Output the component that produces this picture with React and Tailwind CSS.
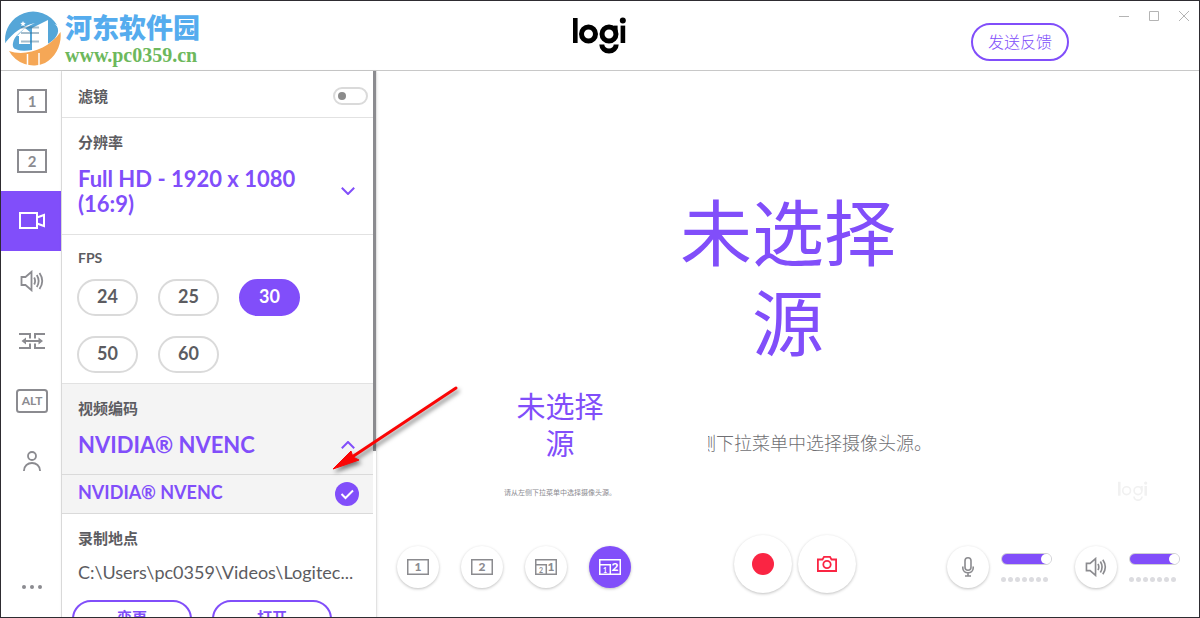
import { useState } from "react";
import clsx from "clsx";

function LogiMark({ className, ring = 5 }) {
  return (
    <svg viewBox="0 0 54 37" className={className} role="img" aria-label="logi" fill="none" stroke="currentColor" strokeWidth={ring}>
      <rect x="0" y="1" width="4.6" height="25" fill="currentColor" stroke="none" />
      <circle cx="15.5" cy="17" r="7" />
      <circle cx="36" cy="17" r="7" />
      <rect x="40.6" y="8.6" width="4" height="8" fill="currentColor" stroke="none" />
      <path d="M28.8 27.5a7.2 6.6 0 0 0 14.4 0" />
      <rect x="47.6" y="8.6" width="4.6" height="17.4" fill="currentColor" stroke="none" />
      <circle cx="49.8" cy="3.4" r="3" fill="currentColor" stroke="none" />
    </svg>
  );
}

function SiteBadge() {
  return (
    <div className="flex items-center gap-1 pt-1.5 pl-1 font-['Liberation_Serif',serif]">
      <svg viewBox="0 0 56 56" className="size-14" aria-hidden="true">
        <path d="M0.300 32A28 28 0 0 1 52 14C44 11 34 13 24 18C13 22 5 27 0.300 32Z" fill="#55a6d8" />
        <path d="M5 36C1 29 6 22 15 18L36 8L48 12C55 15 55 24 47 30C36 38 18 44 5 36Z" fill="#55a6d8" />
        <path d="M1 31C8 22 17 15 30 12C17 18 9 25 8 32C7 37 10 39 15 39C8 42 1 40 1 31Z" fill="#fff" />
        <path d="M14 33V25H12L20 17L25 21V33Z" fill="#fff" />
        <path d="M27 40V17L43 9V35Z" fill="#fff" />
        <path d="M18 10l.8 1.800 2 .2-1.500 1.300.4 2-1.700-1-1.700 1 .4-2-1.500-1.300 2-.2z" fill="#fff" />
        <path d="M16 16.500H34M16 22H34M16 30.500H34" stroke="#3b6f90" strokeWidth="2" opacity=".45" />
        <path d="M4 40C20 46 44 38 55.500 21C57 33 51 46 40 52A28 28 0 0 1 4 40Z" fill="#f5a756" />
        <path d="M22.500 43V56M34 42V56" stroke="#fff" strokeWidth="1.500" />
      </svg>
      <div>
        <p className="font-['Noto_Sans_CJK_SC',sans-serif] text-[27px] leading-8 font-black text-[#55acee]">河东软件园</p>
        <p className="text-xl leading-6 font-bold text-[#6db85c]">www.pc0359.cn</p>
      </div>
    </div>
  );
}

function ScreenIcon({ n, className }) {
  return (
    <svg viewBox="0 0 30 24" className={className} fill="none" stroke="currentColor" strokeWidth="2" aria-hidden="true">
      <rect x="1" y="1" width="28" height="22" />
      <text x="15" y="17.500" textAnchor="middle" fontSize="15" fontWeight="700" fill="currentColor" stroke="none">
        {n}
      </text>
    </svg>
  );
}

function SmallScreenIcon({ n }) {
  return (
    <svg viewBox="0 0 22 16" className="h-4 w-[22px]" fill="none" stroke="currentColor" strokeWidth="1.500" aria-hidden="true">
      <rect x=".75" y=".75" width="20.500" height="14.500" />
      <text x="11" y="12" textAnchor="middle" fontSize="12" fontWeight="900" fill="currentColor" stroke="none">
        {n}
      </text>
    </svg>
  );
}

function PipIcon({ big, small }) {
  return (
    <svg viewBox="0 0 22 16" className="h-4 w-[22px]" fill="none" stroke="currentColor" strokeWidth="1.500" aria-hidden="true">
      <rect x=".75" y=".75" width="20.500" height="14.500" />
      <path d="M1 5.700H11.300V15" />
      <text x="6" y="13.500" textAnchor="middle" fontSize="7" fontWeight="700" fill="currentColor" stroke="none">
        {small}
      </text>
      <text x="16" y="12" textAnchor="middle" fontSize="12" fontWeight="900" fill="currentColor" stroke="none">
        {big}
      </text>
    </svg>
  );
}

function CameraIcon() {
  return (
    <svg viewBox="0 0 26 18" className="h-[18px] w-[26px]" fill="none" stroke="currentColor" strokeWidth="2" aria-hidden="true">
      <path d="M1 1H18V16H1ZM18 5.500L25 3V14L18 11.500" />
    </svg>
  );
}

function SpeakerIcon({ className }) {
  return (
    <svg viewBox="0 0 24 22" className={className} fill="none" stroke="currentColor" strokeWidth="1.800" aria-hidden="true">
      <path d="M1.500 7H5.500L11.500 1.800V20.200L5.500 15H1.500Z" />
      <path d="M14.200 7.500Q16 11 14.200 14.500M16.800 5Q20.500 11 16.800 17M19.500 3Q25 11 19.500 19" />
    </svg>
  );
}

function TransitionIcon() {
  return (
    <svg viewBox="0 0 26 18" className="h-[18px] w-[26px]" fill="none" stroke="currentColor" strokeWidth="2" aria-hidden="true">
      <path d="M0 2H11V6.500M0 16H11V11.500M26 2H16V6.500M26 16H16V11.500M5 9H21" />
      <path d="M7 5.500V12.500L2.500 9ZM19.500 5.500V12.500L24 9Z" fill="currentColor" stroke="none" />
    </svg>
  );
}

function AltIcon() {
  return (
    <svg viewBox="0 0 32 24" className="h-6 w-8" fill="none" stroke="currentColor" strokeWidth="2" aria-hidden="true">
      <rect x="1" y="1" width="30" height="22" rx="2.500" />
      <text x="16" y="16" textAnchor="middle" fontSize="12" fontWeight="700" fill="currentColor" stroke="none">
        ALT
      </text>
    </svg>
  );
}

function PersonIcon() {
  return (
    <svg viewBox="0 0 18 20" className="h-5 w-[18px]" fill="none" stroke="currentColor" strokeWidth="1.800" aria-hidden="true">
      <circle cx="9" cy="5" r="4" />
      <path d="M.9 20C.9 9.300 17.100 9.300 17.100 20" />
    </svg>
  );
}

function MoreIcon() {
  return (
    <svg viewBox="0 0 20 4" className="h-1 w-5" fill="currentColor" aria-hidden="true">
      <circle cx="2" cy="2" r="2" />
      <circle cx="10" cy="2" r="2" />
      <circle cx="18" cy="2" r="2" />
    </svg>
  );
}

function MicIcon() {
  return (
    <svg viewBox="0 0 12 20" className="h-5 w-3" fill="none" stroke="currentColor" strokeWidth="1.600" aria-hidden="true">
      <rect x="3" y=".8" width="6" height="12.500" rx="3" />
      <path d="M.8 9.500V11C.8 17.300 11.200 17.300 11.200 11V9.500M6 15.500V19M3 19H9" />
    </svg>
  );
}

function PhotoIcon() {
  return (
    <svg viewBox="0 0 20 16" className="h-4 w-5" fill="none" stroke="currentColor" strokeWidth="1.800" aria-hidden="true">
      <path d="M.9 3.500H5.500L7 .9H13L14.500 3.500H19.100V15H.9Z" />
      <circle cx="10" cy="8.500" r="3.700" />
    </svg>
  );
}

function Chevron({ up }) {
  return (
    <svg viewBox="0 0 14 8" className="h-2 w-3.5 shrink-0" fill="none" stroke="currentColor" strokeWidth="2" aria-hidden="true">
      <path d={up ? "M.8 7.200L7 1L13.200 7.200" : "M.8 .8L7 7L13.200 .8"} />
    </svg>
  );
}

const NAV = [
  { id: "screen1", label: "1", icon: <ScreenIcon n="1" className="h-6 w-[30px]" /> },
  { id: "screen2", label: "2", icon: <ScreenIcon n="2" className="h-6 w-[30px]" /> },
  { id: "video", label: "视频", icon: <CameraIcon /> },
  { id: "audio", label: "音频", icon: <SpeakerIcon className="h-[22px] w-6" /> },
  { id: "transition", label: "转场", icon: <TransitionIcon /> },
  { id: "hotkeys", label: "ALT", icon: <AltIcon /> },
  { id: "account", label: "账户", icon: <PersonIcon /> },
  { id: "more", label: "更多", icon: <MoreIcon /> },
];

const SCENES = [
  { id: "one", label: "1", icon: <SmallScreenIcon n="1" /> },
  { id: "two", label: "2", icon: <SmallScreenIcon n="2" /> },
  { id: "oneWithTwo", label: "1 + 2", icon: <PipIcon big="1" small="2" /> },
  { id: "twoWithOne", label: "2 + 1", icon: <PipIcon big="2" small="1" /> },
];

const FPS = [24, 25, 30, 50, 60];

function Header() {
  return (
    <header className="grid h-[70px] shrink-0 grid-cols-[1fr_auto_1fr] border-b border-[#c8c8c8]">
      <SiteBadge />
      <LogiMark className="mt-4 h-[37px] w-[54px] text-black" />
      <div className="flex items-start justify-end">
        <button className="mt-[22px] mr-[50px] h-[38px] w-[98px] rounded-full border-2 border-[#814efa] font-light text-[#814efa]">
          发送反馈
        </button>
        <div className="mt-2.5 mr-2.5 flex gap-5 text-[#b4b4b4]">
          <button aria-label="最小化">
            <svg viewBox="0 0 10 10" className="size-2.5" stroke="currentColor"><path d="M0 5.500H10" /></svg>
          </button>
          <button aria-label="最大化">
            <svg viewBox="0 0 10 10" className="size-2.5" fill="none" stroke="currentColor"><path d="M.5 .5H9.500V9.500H.5Z" /></svg>
          </button>
          <button aria-label="关闭">
            <svg viewBox="0 0 10 10" className="size-2.5" stroke="currentColor"><path d="M0 0L10 10M10 0L0 10" /></svg>
          </button>
        </div>
      </div>
    </header>
  );
}

function SideNav({ active, onSelect }) {
  return (
    <nav className="flex w-[61px] shrink-0 flex-col border-r border-[#e2e2e2]">
      {NAV.map((item) => (
        <button
          key={item.id}
          aria-label={item.label}
          onClick={() => onSelect(item.id)}
          className={clsx(
            "flex h-[60px] shrink-0 items-center justify-center pb-px pl-px last:mt-auto",
            active === item.id ? "bg-[#814efa] text-white" : "text-[#8b8b90]"
          )}
        >
          {item.icon}
        </button>
      ))}
    </nav>
  );
}

function SettingsPanel() {
  const [filter, setFilter] = useState(false);
  const [fps, setFps] = useState(30);
  const [open, setOpen] = useState(true);

  return (
    <section className="flex w-[315px] shrink-0 border-r border-[#e2e2e2] text-[15px] leading-5 font-bold text-[#5c5c61] shadow-sm">
      <div className="min-w-0 flex-1 overflow-hidden">
        <label className="flex h-[47px] items-center justify-between border-b border-[#e2e2e2] pt-[3px] pr-[5px] pl-4">
          滤镜
          <input
            type="checkbox"
            checked={filter}
            onChange={(e) => setFilter(e.target.checked)}
            className="flex h-[18px] w-[35px] appearance-none items-center rounded-full border-2 border-[#dadada] px-[3px] before:size-2 before:rounded-full before:bg-[#8b8b8b] checked:justify-end"
          />
        </label>

        <div className="h-[117px] border-b border-[#e2e2e2] px-4 pt-3.5">
          <h2>分辨率</h2>
          <button aria-haspopup="listbox" className="mt-3.5 flex w-full items-center justify-between pr-0.5 text-left text-[22px] leading-[25px] text-[#814efa]">
            <span className="w-60">Full HD - 1920 x 1080 (16:9)</span>
            <Chevron />
          </button>
        </div>

        <div className="h-[149px] border-b border-[#e2e2e2] pt-[13px] pr-8 pl-[15px]">
          <h2 className="pl-px text-sm leading-5">FPS</h2>
          <div className="mt-[11px] flex flex-wrap gap-5">
            {FPS.map((n) => (
              <button
                key={n}
                aria-pressed={fps === n}
                onClick={() => setFps(n)}
                className={clsx(
                  "h-[37px] w-[61px] rounded-full border-2 pb-1 text-lg leading-5",
                  fps === n ? "border-[#814efa] bg-[#814efa] text-white" : "border-[#dadada]"
                )}
              >
                {n}
              </button>
            ))}
          </div>
        </div>

        <div className="bg-[#f4f4f4]">
          <div className="h-[91px] border-b border-[#dadada] px-4 pt-3.5">
            <h2>视频编码</h2>
            <button
              aria-haspopup="listbox"
              aria-expanded={open}
              onClick={() => setOpen(!open)}
              className="mt-3.5 flex w-full items-center justify-between pr-0.5 text-[22px] leading-[25px] text-[#814efa]"
            >
              NVIDIA® NVENC
              <Chevron up={open} />
            </button>
          </div>
          {open && (
            <button aria-pressed="true" className="flex h-[39px] w-full items-center justify-between border-b border-[#dadada] pr-3.5 pl-4 text-lg leading-5 text-[#814efa]">
              <span className="pb-1">NVIDIA® NVENC</span>
              <svg viewBox="0 0 24 24" className="size-6" fill="none" aria-hidden="true">
                <circle cx="12" cy="12" r="12" fill="#814efa" />
                <path d="M6.500 12L10.500 16L18 8.500" stroke="#fff" strokeWidth="2" />
              </svg>
            </button>
          )}
        </div>

        <div className="px-2.5 pt-3.5">
          <h2 className="pl-1.5">录制地点</h2>
          <p className="mt-3 truncate pl-1.5 text-lg leading-6 font-normal">C:\Users\pc0359\Videos\Logitec...</p>
          <div className="mt-4 flex gap-5 text-[#814efa]">
            <button className="h-[38px] w-[120px] rounded-full border-2 border-[#814efa] pb-1">变更</button>
            <button className="h-[38px] w-[120px] rounded-full border-2 border-[#814efa] pb-1">打开</button>
          </div>
        </div>
      </div>
      <div className="h-[380px] w-[3px] bg-[#8b8b8f]" />
    </section>
  );
}

function Preview() {
  return (
    <div className="relative mx-auto mt-6 aspect-video w-[752px] shrink-0 text-center">
      <div className="pt-[92px]">
        <p className="mx-auto w-[216px] text-[72px] leading-[90px] text-[#814efa]">未选择源</p>
        <p className="mt-16 text-lg leading-6 font-light text-[#6f6f73]">请从左侧下拉菜单中选择摄像头源。</p>
      </div>
      <LogiMark className="absolute right-4 bottom-4 h-[21px] w-[30px] text-[#f1f1f1]" ring={3} />
      {/* picture-in-picture source */}
      <div className="absolute bottom-0 left-0 aspect-video w-[296px] bg-white pt-9">
        <p className="mx-auto w-[87px] text-[29px] leading-[37px] text-[#814efa]">未选择源</p>
        <p className="mt-6 text-[7px] leading-3 text-[#8b8b90]">请从左侧下拉菜单中选择摄像头源。</p>
      </div>
    </div>
  );
}

function VolumeControl({ label, icon }) {
  const [volume, setVolume] = useState(100);
  return (
    <div className="flex items-center gap-3">
      <button aria-label={label} className="flex size-[42px] items-center justify-center rounded-full text-[#8b8b8f] shadow-[0_1px_3px_#00000040]">
        {icon}
      </button>
      <div className="flex w-[51px] flex-col gap-3">
        <input
          type="range"
          aria-label={label}
          value={volume}
          onChange={(e) => setVolume(Number(e.target.value))}
          style={{ backgroundSize: `${volume * 0.9}% 100%` }}
          className="h-3 w-full appearance-none rounded-full border border-[#d0d0d4] bg-[linear-gradient(#814efa,#814efa)] bg-no-repeat [&::-webkit-slider-thumb]:size-2.5 [&::-webkit-slider-thumb]:appearance-none [&::-webkit-slider-thumb]:rounded-full [&::-webkit-slider-thumb]:bg-white"
        />
        <div className="flex gap-0.5">
          {[1, 2, 3, 4, 5, 6, 7].map((n) => (
            <span key={n} className="size-[5px] rounded-full bg-[#dcdce0]" />
          ))}
        </div>
      </div>
    </div>
  );
}

function ControlBar() {
  const [scene, setScene] = useState("twoWithOne");
  return (
    <div className="mt-auto flex items-center justify-between pr-[19px] pb-[18px] pl-[9px]">
      <div className="flex">
        {SCENES.map((s) => (
          <div key={s.id} className="flex w-16 justify-center">
            <button
              aria-label={s.label}
              aria-pressed={scene === s.id}
              onClick={() => setScene(s.id)}
              className={clsx(
                "flex size-[42px] items-center justify-center rounded-full shadow-[0_1px_3px_#00000040]",
                scene === s.id ? "bg-[#814efa] text-white" : "text-[#8b8b8f]"
              )}
            >
              {s.icon}
            </button>
          </div>
        ))}
      </div>
      <div className="flex gap-1.5 pb-1.5 text-[#fa2543]">
        <button aria-label="录制" className="flex size-[58px] items-center justify-center rounded-full shadow-[0_1px_3px_#00000040]">
          <span className="size-[22px] rounded-full bg-[#fa2543]" />
        </button>
        <button aria-label="拍照" className="flex size-[58px] items-center justify-center rounded-full shadow-[0_1px_3px_#00000040]">
          <PhotoIcon />
        </button>
      </div>
      <div className="flex gap-[23px]">
        <VolumeControl label="麦克风" icon={<MicIcon />} />
        <VolumeControl label="扬声器" icon={<SpeakerIcon className="h-5 w-[22px]" />} />
      </div>
    </div>
  );
}

function PointerArrow() {
  return (
    <svg viewBox="0 0 140 96" className="pointer-events-none absolute top-[381px] left-[325px] h-24 w-[140px] drop-shadow-[2px_3px_2px_#00000080]" aria-hidden="true">
      <path d="M130 6L26 75" stroke="#fa0505" strokeWidth="3" strokeLinecap="round" />
      <path d="M7 87L25 69L27 75L33 78Z" fill="#fa0505" stroke="#fa0505" />
    </svg>
  );
}

export default function App() {
  const [tab, setTab] = useState("video");
  return (
    <div className="relative flex h-screen flex-col overflow-hidden border border-[#2e2c31] bg-white font-[Lato,'Noto_Sans_CJK_SC',sans-serif]">
      <Header />
      <div className="flex min-h-0 flex-1">
        <SideNav active={tab} onSelect={setTab} />
        <SettingsPanel />
        <main className="flex min-w-0 flex-1 flex-col">
          <Preview />
          <ControlBar />
        </main>
      </div>
      <PointerArrow />
    </div>
  );
}
